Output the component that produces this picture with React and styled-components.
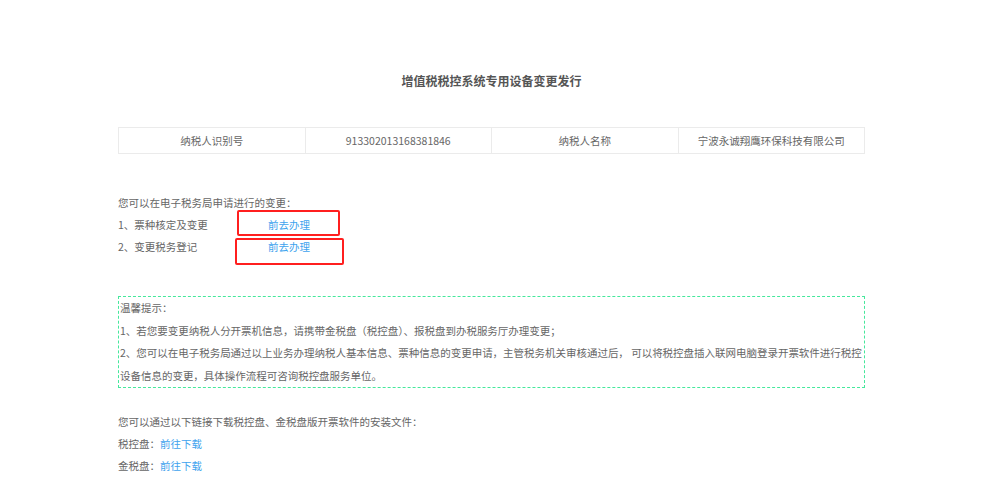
import React from "react";
import styled, { createGlobalStyle } from "styled-components";

const GlobalStyle = createGlobalStyle`
  html, body {
    margin: 0;
    padding: 0;
    background: #fff;
  }
  body {
    font-family: "Microsoft YaHei", "Noto Sans CJK SC", "Noto Sans", sans-serif;
    font-size: 10.5px;
    color: #666;
  }
`;

const info = [
  ["纳税人识别号", "913302013168381846", "纳税人名称", "宁波永诚翔鹰环保科技有限公司"],
];

// red annotation boxes, offsets from the link's own box (row height 22)
const changes = [
  { label: "1、票种核定及变更", box: { top: -4, left: -31, right: -30, bottom: 0 } },
  { label: "2、变更税务登记", box: { top: 2, left: -33, right: -34, bottom: -7 } },
];

const App = () => {
  return (
    <>
      <GlobalStyle />
      <Page>
        <Title>增值税税控系统专用设备变更发行</Title>
        <InfoTable>
          <tbody>
            {info.map((row, index) => (
              <tr key={index}>
                {row.map((cell, cIndex) => (
                  <Cell key={cIndex}>{cell}</Cell>
                ))}
              </tr>
            ))}
          </tbody>
        </InfoTable>

        <Section $top={38}>
          <Line>您可以在电子税务局申请进行的变更：</Line>
          {changes.map((item, index) => (
            <Row key={index}>
              <Label>{item.label}</Label>
              <MarkedLink $box={item.box}>前去办理</MarkedLink>
            </Row>
          ))}
        </Section>

        <Notice>
          <NoticeLine>温馨提示：</NoticeLine>
          <NoticeLine>
            1、若您要变更纳税人分开票机信息，请携带金税盘（税控盘）、报税盘到办税服务厅办理变更；
          </NoticeLine>
          <NoticeLine>
            2、您可以在电子税务局通过以上业务办理纳税人基本信息、票种信息的变更申请，主管税务机关审核通过后， 可以将税控盘插入联网电脑登录开票软件进行税控设备信息的变更，具体操作流程可咨询税控盘服务单位。
          </NoticeLine>
        </Notice>

        <Section $top={23}>
          <Line>您可以通过以下链接下载税控盘、金税盘版开票软件的安装文件：</Line>
          <Line>
            税控盘：<Link>前往下载</Link>
          </Line>
          <Line>
            金税盘：<Link>前往下载</Link>
          </Line>
        </Section>
      </Page>
    </>
  );
};

export default App;

const Page = styled.div`
  width: 747px;
  margin-left: 118px;
  padding-top: 70px;
  padding-bottom: 20px;
`;

const Title = styled.h2`
  margin: 0;
  height: 22px;
  line-height: 22px;
  text-align: center;
  font-size: 12px;
  font-weight: bold;
  color: #555;
`;

const InfoTable = styled.table`
  width: 100%;
  margin-top: 35px;
  border-collapse: collapse;
  table-layout: fixed;
`;

const Cell = styled.td`
  height: 25px;
  padding: 0;
  border: 1px solid #ebebeb;
  text-align: center;
  color: #666;
`;

const Section = styled.div`
  margin-top: ${(props) => props.$top}px;
`;

const Line = styled.div`
  line-height: 22px;
`;

const Row = styled.div`
  display: flex;
  line-height: 22px;
`;

const Label = styled.span`
  width: 150px;
`;

const Link = styled.a`
  color: #3ea3ee;
  cursor: pointer;
`;

const MarkedLink = styled(Link)`
  position: relative;
  &::after {
    content: "";
    position: absolute;
    top: ${(props) => props.$box.top}px;
    left: ${(props) => props.$box.left}px;
    right: ${(props) => props.$box.right}px;
    bottom: ${(props) => props.$box.bottom}px;
    border: 2px solid #ff1f1f;
    border-radius: 2px;
    pointer-events: none;
  }
`;

const Notice = styled.div`
  margin-top: 38px;
  border: 1px dashed #45e89c;
  padding: 0 0 0 1px;
  letter-spacing: -0.02px;
`;

const NoticeLine = styled.p`
  margin: 0;
  line-height: 22.5px;
`;
